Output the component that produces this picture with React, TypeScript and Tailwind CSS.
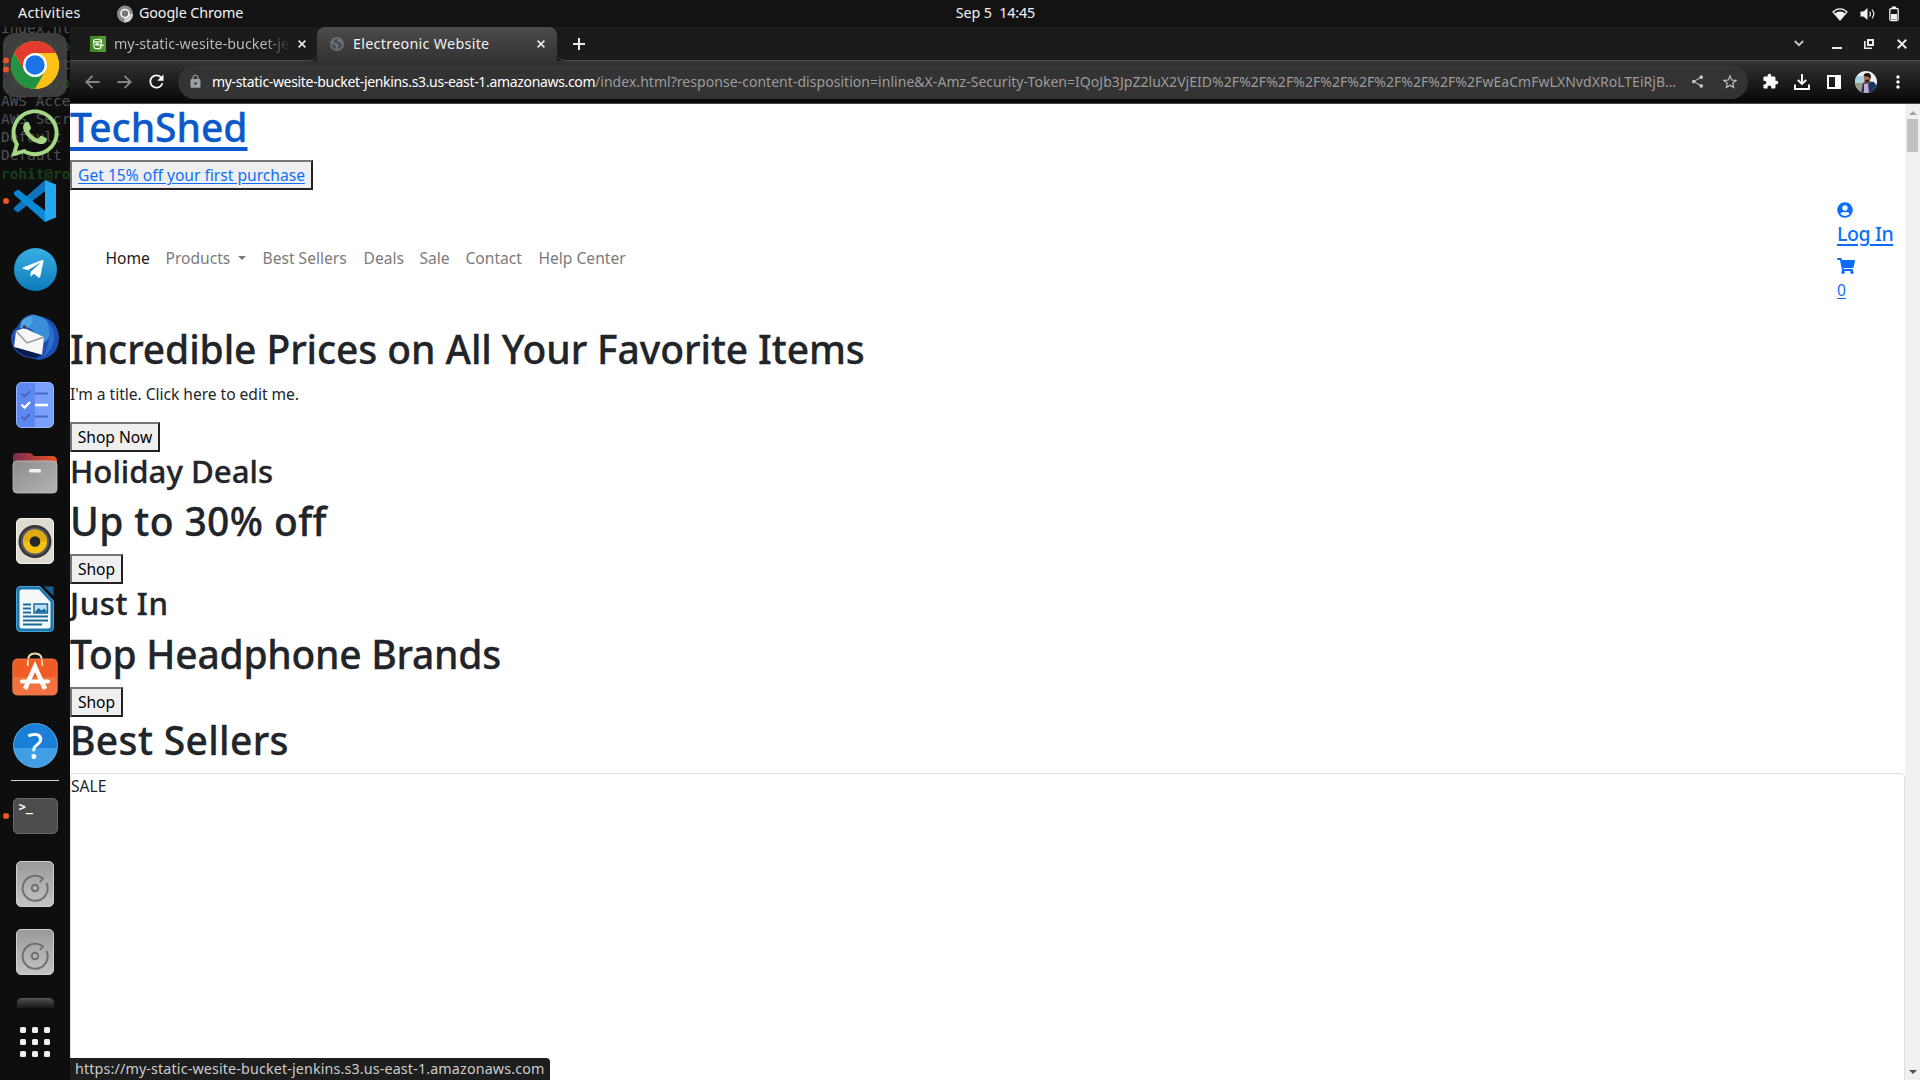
import React from "react";
import { FaWhatsapp, FaTelegramPlane, FaUserCircle, FaShoppingCart } from "react-icons/fa";
import { MdExtension, MdShare, MdStarBorder, MdLock, MdRefresh, MdMoreVert } from "react-icons/md";

const URL_REST =
  "/index.html?response-content-disposition=inline&X-Amz-Security-Token=IQoJb3JpZ2luX2VjEID%2F%2F%2F%2F%2F%2F%2F%2F%2F%2FwEaCmFwLXNvdXRoLTEiRjB…";

function TopBar() {
  return (
    <header className="grid h-[27px] shrink-0 grid-cols-3 items-center bg-[#131313] text-[14.3px] leading-none text-[#f2f2f2]">
      <div className="flex items-center pl-[18px]">
        <span className="w-[99px] tracking-[0.3px]">Activities</span>
        <svg width="16" height="18" viewBox="0 0 16 18" className="mr-1.5">
          <ellipse cx="8" cy="9" rx="8" ry="8.5" fill="#8b8b8b" />
          <path d="M8 9h8a8 8.500 0 0 1-9 8.500z" fill="#cfcfcf" />
          <circle cx="8" cy="8.500" r="4" fill="#777" stroke="#fff" strokeWidth="1.500" />
        </svg>
        <span className="tracking-[-0.1px]">Google Chrome</span>
      </div>
      <div className="whitespace-pre pl-[71px] text-center tracking-[-0.1px]">
        Sep 5  14:45
      </div>
      <div className="flex items-center justify-end gap-3 pr-5">
        <svg width="16" height="14" viewBox="0 0 16 14">
          <path d="M1 5C5 .8 11 .8 15 5L8 13z" fill="none" stroke="#f2f2f2" strokeWidth="1.200" />
          <path d="M3 6.300C6 4 10 4 13 6.300L8 13z" fill="#f2f2f2" />
        </svg>
        <svg width="16" height="14" viewBox="0 0 16 14" fill="none" stroke="#f2f2f2">
          <path d="M.5 4.500h3L7.500 1v12l-4-3.500h-3z" fill="#f2f2f2" stroke="none" />
          <path d="M9.500 4.500q1.800 2.500 0 5M12 2.500q3.600 4.500 0 9" strokeWidth="1.200" />
        </svg>
        <svg width="12" height="16" viewBox="0 0 12 16">
          <rect x="1.800" y="2.500" width="8.400" height="12" rx="1.500" fill="none" stroke="#f2f2f2" strokeWidth="1.300" />
          <path d="M4 0.500h4v2H4zM3 8h6v5.500H3z" fill="#f2f2f2" />
        </svg>
      </div>
    </header>
  );
}

function Cross({ size = 8 }: { size?: number }) {
  return (
    <svg width={size} height={size} viewBox="0 0 8 8" stroke="#e8e8e8" strokeWidth="1.600">
      <path d="M.6.6l6.800 6.800M7.400.6L.6 7.400" />
    </svg>
  );
}

function TabStrip() {
  return (
    <div className="flex h-[34px] shrink-0 bg-[#1b1b1b] text-[14.3px]">
      <div className="flex w-[247px] items-center rounded-br-[8px] border-b border-[#4d4d4d] pl-5 pr-[11px]">
        <svg width="16" height="16" viewBox="0 0 16 16">
          <rect width="16" height="16" fill="#3f8624" />
          <path d="M8 0h8v16H8z" fill="#52982f" />
          <g fill="none" stroke="#fff" strokeWidth="1.100">
            <ellipse cx="7.500" cy="4.500" rx="4" ry="1.300" />
            <path d="M3.500 4.500l.8 7.500q3.200 1.600 6.400 0l.8-7.500M7 8.200l5 1.500q1.600 0 .8-1.300M6 7h2v2H6z" />
          </g>
        </svg>
        <div className="ml-2 w-[177px] overflow-hidden whitespace-nowrap bg-gradient-to-r from-[#bdbdbd] from-85% to-[#1b1b1b] bg-clip-text text-transparent">
          my-static-wesite-bucket-je
        </div>
        <div className="ml-auto">
          <Cross />
        </div>
      </div>
      <div className="flex w-[240px] items-center rounded-t-[8px] bg-gradient-to-b from-[#4b4b4b] to-[#333333] pl-[13px] pr-3 text-[#f1f1f1]">
        <svg width="14" height="14" viewBox="0 0 14 14">
          <circle cx="7" cy="7" r="7" fill="#6a6d73" />
          <path d="M7.500 1.800Q4 2 3.800 5l3 1.200L9 8l-1.500 4q4-.5 4.500-5L9.500 5.500 6.800 4.600z" fill="#43464b" />
          <path d="M1.500 7l2.500.8L6 10l-.5 2Q2 11 1.500 7z" fill="#43464b" />
        </svg>
        <span className="ml-[9px] tracking-[0.3px]">Electreonic Website</span>
        <div className="ml-auto">
          <Cross />
        </div>
      </div>
      <div className="flex flex-1 items-center rounded-bl-[8px] border-b border-[#4d4d4d] pl-4 pr-[13px]">
        <svg width="12" height="12" viewBox="0 0 12 12" stroke="#e8e8e8" strokeWidth="2">
          <path d="M6 0v12M0 6h12" />
        </svg>
        <div className="ml-auto flex items-center">
          <svg width="10" height="7" viewBox="0 0 10 7" fill="none" stroke="#c8c8c8" strokeWidth="1.800" className="mr-7">
            <path d="M.8 1L5 5.200 9.200 1" />
          </svg>
          <div className="mr-[22px] mt-2 h-[2px] w-[10px] bg-[#ececec]" />
          <svg width="10" height="10" viewBox="0 0 10 10" fill="none" stroke="#ececec" className="mr-[23px]">
            <rect x="4" y="1" width="5" height="5" strokeWidth="2" />
            <path d="M.8 2v7.200H8" strokeWidth="1.600" />
          </svg>
          <Cross size={10} />
        </div>
      </div>
    </div>
  );
}

function Cell({ children }: { children: React.ReactNode }) {
  return <div className="flex w-8 shrink-0 items-center justify-center">{children}</div>;
}

function Toolbar() {
  return (
    <div className="flex h-[43px] shrink-0 items-center border-b border-[#4a4444] bg-gradient-to-b from-[#333333] to-[#080808] px-[6px] pb-px">
      <Cell>
        <svg width="15" height="14" viewBox="0 0 15 14" fill="none" stroke="#858585" strokeWidth="1.900">
          <path d="M14.500 7H1.500M7.500.8L1.300 7l6.200 6.200" />
        </svg>
      </Cell>
      <Cell>
        <svg width="15" height="14" viewBox="0 0 15 14" fill="none" stroke="#858585" strokeWidth="1.900">
          <path d="M.5 7h13M7.500.8L13.700 7l-6.200 6.200" />
        </svg>
      </Cell>
      <Cell>
        <MdRefresh className="size-[21px] text-white" />
      </Cell>
      <div className="ml-[6px] mr-[6px] flex h-[34px] flex-1 items-center rounded-full bg-[#333333] pl-[10px] text-[14px]">
        <MdLock className="size-[15px] text-[#9aa0a6]" />
        <span className="-mt-px ml-[9px] w-[383px] whitespace-nowrap tracking-[-0.33px] text-white">
          my-static-wesite-bucket-jenkins.s3.us-east-1.amazonaws.com
        </span>
        <span className="-mt-px whitespace-nowrap tracking-[0.04px] text-[#9c9c9c]">{URL_REST}</span>
        <MdShare className="ml-auto mr-4 size-[15px] text-[#c0c0c0]" />
        <MdStarBorder className="mr-[9px] size-[18px] text-[#c0c0c0]" />
      </div>
      <Cell>
        <MdExtension className="size-[17px] text-white" />
      </Cell>
      <Cell>
        <svg width="16" height="16" viewBox="0 0 16 16" fill="none" stroke="#fff" strokeWidth="1.900">
          <path d="M8 0v9.500M3.800 6L8 10l4.200-4M1 10.500V15h14v-4.500" />
        </svg>
      </Cell>
      <Cell>
        <div className="h-[14px] w-[14px] border-2 border-r-[6px] border-white" />
      </Cell>
      <Cell>
        <svg width="22" height="22" viewBox="0 0 22 22">
          <clipPath id="face">
            <circle cx="11" cy="11" r="11" />
          </clipPath>
          <g clipPath="url(#face)">
            <path d="M0 0h22v22H0z" fill="#e9f1f5" />
            <path d="M0 5h9v8H0z" fill="#a9cfe0" />
            <path d="M0 12h9v10H0z" fill="#9a9a86" />
            <path d="M8 12l4-2 7 1 3 4v7H6z" fill="#1d3563" />
            <path d="M9 13l4-1 1 10H9z" fill="#c9a9cf" />
            <path d="M9 4h6v7l-2 2-4-2z" fill="#b0704f" />
            <path d="M8.500 5Q9 1.500 13 2q3 .5 3 4l-1 3-1-3z" fill="#1c1715" />
            <path d="M10 9l4-.5V11l-3 1.500z" fill="#35221a" />
          </g>
        </svg>
      </Cell>
      <Cell>
        <MdMoreVert className="size-[20px] text-white" />
      </Cell>
    </div>
  );
}

function OutsetButton({ children, className = "text-black" }: { children: React.ReactNode; className?: string }) {
  return (
    <button
      className={`block h-[30px] border-2 border-t-[#767676] border-r-[#212121] border-b-[#212121] border-l-[#767676] bg-[#efefef] text-center text-[15.6px] leading-[24px] ${className}`}
    >
      {children}
    </button>
  );
}

function Title({ children, className }: { children: React.ReactNode; className: string }) {
  return (
    <h1 className={`mb-2 h-[48px] text-[39px] font-medium leading-[46px] [-webkit-text-stroke:0.3px_currentColor] ${className}`}>
      {children}
    </h1>
  );
}

function Subtitle({ children, className }: { children: React.ReactNode; className: string }) {
  return (
    <h2 className={`mb-2 text-[31.2px] font-medium leading-[38.400px] [-webkit-text-stroke:0.3px_currentColor] ${className}`}>
      {children}
    </h2>
  );
}

function Page() {
  return (
    <main className="flex-1 overflow-hidden bg-white text-[15.6px] leading-[24px] text-[#212529]">
      <Title className="tracking-[-0.02px] text-[#0a58ca] underline decoration-[3.500px] underline-offset-[5px]">TechShed</Title>
      <OutsetButton className="w-[243px] text-[#0d6efd] underline underline-offset-2">Get 15% off your first purchase</OutsetButton>
      <nav className="flex h-[136px] items-center pl-[35.500px] text-[#7b7b7b]">
        <a className="w-[60px] text-[#1a1a1a]">Home</a>
        <a className="flex w-[97px] items-center">
          Products
          <span className="ml-[8px] border-x-[4.500px] border-t-[4.500px] border-x-transparent border-t-[#7b7b7b]" />
        </a>
        <a className="w-[101px]">Best Sellers</a>
        <a className="w-[56px]">Deals</a>
        <a className="w-[46px]">Sale</a>
        <a className="w-[73px]">Contact</a>
        <a>Help Center</a>
        <div className="ml-auto w-[68px] self-start pt-2 text-[#0d6efd]">
          <div className="flex h-6 items-center">
            <FaUserCircle className="size-4" />
          </div>
          <div className="mb-2 h-6 whitespace-nowrap text-[19.500px] font-medium tracking-[-0.4px] underline decoration-2 underline-offset-[3px]">Log In</div>
          <div className="flex h-6 items-center">
            <FaShoppingCart className="h-4 w-[18px]" />
          </div>
          <div className="underline underline-offset-2">0</div>
        </div>
      </nav>
      <Title className="tracking-[-0.09px]">Incredible Prices on All Your Favorite Items</Title>
      <p className="mb-4 tracking-[-0.03px]">I'm a title. Click here to edit me.</p>
      <OutsetButton className="w-[90px] text-black">Shop Now</OutsetButton>
      <Subtitle className="tracking-[0px]">Holiday Deals</Subtitle>
      <Title className="tracking-[0.4px]">Up to 30% off</Title>
      <OutsetButton className="w-[53px] text-black">Shop</OutsetButton>
      <Subtitle className="tracking-[0.6px]">Just In</Subtitle>
      <Title className="tracking-[-0.25px]">Top Headphone Brands</Title>
      <OutsetButton className="w-[53px] text-black">Shop</OutsetButton>
      <Title className="tracking-[0.35px]">Best Sellers</Title>
      <div className="h-[400px] rounded border border-[#dfdfdf]">SALE</div>
    </main>
  );
}

function Scrollbar() {
  return (
    <div className="flex w-[15px] shrink-0 flex-col items-center bg-[#f0f0f0]">
      <div className="mt-[7px] border-x-4 border-b-4 border-x-transparent border-b-[#a3a3a3]" />
      <div className="mt-1 h-[33px] w-[11px] bg-[#c1c1c1]" />
      <div className="mb-[6px] mt-auto border-x-4 border-t-4 border-x-transparent border-t-[#505050]" />
    </div>
  );
}

function Chrome() {
  return (
    <svg width="48" height="48" viewBox="-24 -24 48 48">
      <circle r="24" fill="#fbbc05" />
      <path d="M-20.800-12A24 24 0 0 1 20.800-12L0-12-10.400 6z" fill="#e33b2e" />
      <path d="M-20.800-12A24 24 0 0 0 0 24L10.400 6-10.400 6z" fill="#229342" />
      <path d="M0 24L10.400 6 0-12H20.800A24 24 0 0 1 0 24z" fill="#fbc116" />
      <circle r="12" fill="#fff" />
      <circle r="9.700" fill="#1a73e8" />
    </svg>
  );
}

function VsCode() {
  return (
    <svg width="42" height="42" viewBox="0 0 42 42">
      <path d="M31 0L0 27.500v2.500l4 2.500L31 11.500z" fill="#0f74bd" />
      <path d="M31 42L0 14.500V12l4-2.500L31 30.500z" fill="#0a8ad6" />
      <path d="M31 0l11 4.500v33L31 42V0z" fill="#25a7f2" />
      <path d="M31 11.500v19L18.500 21z" fill="#0e0e0e" />
    </svg>
  );
}

function Telegram() {
  return (
    <div className="flex size-[43px] items-center justify-center rounded-full bg-gradient-to-b from-[#37aee2] to-[#0b7cba]">
      <FaTelegramPlane className="mr-1 size-[24px] text-white" />
    </div>
  );
}

function Thunderbird() {
  return (
    <svg width="48" height="48" viewBox="0 0 48 48">
      <path d="M6 14Q12 2 22 1l3 2Q46 4 48 24 48 44 28 47L14 44Q0 38 0 25q0-6 6-11z" fill="#1f4fb0" />
      <path d="M10 14Q16 1 24 2q16 3 16 18-6 14-12 8Q22 12 10 14z" fill="#3a8fd8" />
      <path d="M36 8q12 12 4 28l-8 9q10-20 4-37z" fill="#2b6fce" />
      <path d="M5 18l8-3 20 9-2 18L3 34z" fill="#f6f6f6" />
      <path d="M5 18l11 12 17-6" fill="none" stroke="#999" strokeWidth="1.500" />
      <path d="M3 34l28 8-6 3q-14 0-22-11z" fill="#0c1c4c" />
      <path d="M9 15Q10 4 20 3q4 6-2 11z" fill="#4fa5e0" />
      <circle cx="13.500" cy="14" r="1.800" fill="#5b3020" />
    </svg>
  );
}

function Todo() {
  return (
    <svg width="38" height="46" viewBox="0 0 38 46" fill="none" strokeWidth="2">
      <rect x=".5" y=".5" width="37" height="45" rx="5" fill="#7ba0fb" stroke="#9ab6fc" strokeWidth="1" />
      <path d="M1 5q0-4 4-4h14v44H5q-4 0-4-4z" fill="#5f87f2" />
      <g stroke="#4a68c0">
        <path d="M5.500 11.500l3 3 5.500-5.500M19 11.500h13M5.500 34.500l3 3 5.500-5.500M19 34.500h13" />
      </g>
      <path d="M5.500 22.500l3 3 5.500-5.500M19 23h13" stroke="#fff" strokeWidth="2.300" />
    </svg>
  );
}

function Files() {
  return (
    <svg width="46" height="42" viewBox="0 0 46 42">
      <defs>
        <linearGradient id="folder">
          <stop offset="0" stopColor="#7b2b50" />
          <stop offset="1" stopColor="#e95420" />
        </linearGradient>
        <linearGradient id="front" x2="1" y2="1">
          <stop offset="0" stopColor="#8c8c8c" />
          <stop offset="1" stopColor="#b4b4b4" />
        </linearGradient>
      </defs>
      <path d="M1 5q0-4 4-4h12q3 0 5 3h18q5 0 5 5v14H1z" fill="url(#folder)" />
      <rect x="1" y="9" width="44" height="32" rx="4" fill="url(#front)" stroke="#c4c4c4" strokeWidth=".8" />
      <rect x="17" y="17" width="12" height="3.500" rx="1.500" fill="#f2f2f2" />
    </svg>
  );
}

function Speaker() {
  return (
    <svg width="38" height="46" viewBox="0 0 38 46">
      <rect x=".5" y=".5" width="37" height="45" rx="4.500" fill="#dedad0" stroke="#f3f0e8" />
      <circle cx="19" cy="23.500" r="16.500" fill="#33343c" />
      <circle cx="19" cy="23.500" r="14" fill="#5b5b62" />
      <circle cx="19" cy="23.500" r="12" fill="#f5c211" />
      <path d="M7 23.500a12 12 0 0 1 24 0z" fill="#e0ab10" />
      <circle cx="19" cy="23.500" r="5.300" fill="#26262b" />
    </svg>
  );
}

function Writer() {
  return (
    <svg width="38" height="46" viewBox="0 0 38 46">
      <path d="M4 .5h20L37.500 15v26.500q0 4-4 4H4q-3.500 0-3.500-4V4.500Q.5.5 4 .5z" fill="#1a7ab0" stroke="#4aa3d4" />
      <path d="M5.500 3.500H23L34.500 16v24q0 2.500-2.500 2.500H6Q3.500 42.500 3.500 40V6q0-2.500 2-2.500z" fill="#f7f8fa" />
      <path d="M28 .5h9.500v9.500z" fill="#14608f" />
      <path d="M7 18.500h8M7 22.500h8M7 26.500h8M7 30.500h25M7 34.500h25M7 38.500h19" stroke="#1a6a9e" strokeWidth="2" />
      <rect x="18" y="18" width="13.500" height="9" fill="#bfe0f2" stroke="#1a6a9e" strokeWidth="1.500" />
      <path d="M18.500 26.500l4-4.500 3 2.500 3-2 3 4z" fill="#1a6a9e" />
    </svg>
  );
}

function Software() {
  return (
    <svg width="46" height="44" viewBox="0 0 46 44">
      <path d="M16 9q0-7.500 7-7.500T30 9" fill="none" stroke="#f0d9a4" strokeWidth="2.200" />
      <rect x=".8" y="7" width="44.400" height="36" rx="4.500" fill="#ef5b25" stroke="#f58a5e" strokeWidth=".8" />
      <path d="M1 25h44v14q0 4-4 4H5q-4 0-4-4z" fill="#f27340" />
      <path d="M13 37L23 14.500 33 37" fill="none" stroke="#fff" strokeWidth="4.500" />
      <path d="M10 29.500h26" stroke="#fff" strokeWidth="4.200" strokeLinecap="round" />
      <path d="M16 8q0 4-.3 6M30 8q0 4 .3 6" stroke="#f0d9a4" strokeWidth="2" fill="none" />
    </svg>
  );
}

function Help() {
  return (
    <div className="flex size-[45px] items-center justify-center rounded-full border border-[#58b0ee] bg-gradient-to-b from-[#1a7fd6] from-55% to-[#3f9ee6] to-55% text-[36px] leading-none text-white">
      <span className="mt-px">?</span>
    </div>
  );
}

function Terminal() {
  return (
    <div className="h-9 w-[45px] rounded-[5px] border border-[#6b6b6b] bg-[#4c4c4c] pl-[5px] pt-px font-['DejaVu_Sans_Mono'] text-[12px] font-bold leading-[14px] text-white">
      &gt;_
    </div>
  );
}

function Disk() {
  return (
    <svg width="38" height="46" viewBox="0 0 38 46" fill="none" stroke="#6e6e6e" strokeWidth="1.900">
      <defs>
        <linearGradient id="disk" x2="0" y2="1">
          <stop offset="0" stopColor="#9a9a9a" />
          <stop offset="1" stopColor="#c4c4c4" />
        </linearGradient>
      </defs>
      <rect x=".5" y=".5" width="37" height="45" rx="4.500" fill="url(#disk)" stroke="#cfcfcf" strokeWidth="1" />
      <path d="M30.500 22A12.500 12.500 0 1 1 27 17.500l-3 3.500" />
      <circle cx="19" cy="27" r="3.300" />
    </svg>
  );
}

function Slot({ children, dots = 0 }: { children: React.ReactNode; dots?: number }) {
  return (
    <div className="relative flex h-[68px] shrink-0 items-center justify-center">
      {children}
      <div className="absolute left-[3px] top-1/2 flex -translate-y-1/2 flex-col gap-[3px]">
        {Array.from({ length: dots }, (_, i) => (
          <i key={i} className="block size-[6px] rounded-full bg-[#e95420]" />
        ))}
      </div>
    </div>
  );
}

const SHELL: [string, boolean][] = [
  ["index.ht", false],
  ["rohit@ro", true],
  ["t     nt", false],
  ["rohit@ro", true],
  ["AWS Acce", false],
  ["AWS Secr", false],
  ["Default ", false],
  ["Default ", false],
  ["rohit@ro", true],
];

function Dock() {
  return (
    <aside className="relative h-full w-[70px] shrink-0 overflow-hidden bg-[#0e0e0e]">
      <div className="absolute left-[1px] top-[-8px] font-['DejaVu_Sans_Mono'] text-[14.400px] leading-[18.200px] text-[#525252]">
        {SHELL.map(([text, prompt], i) => (
          <div key={i} className={prompt ? "whitespace-pre font-bold text-[#174017]" : "whitespace-pre"}>
            {text}
          </div>
        ))}
      </div>
      <div className="relative flex h-full flex-col pt-1">
        <Slot dots={2}>
          <div className="flex size-16 items-center justify-center rounded-xl bg-[#4a4a4a]/80">
            <Chrome />
          </div>
        </Slot>
        <Slot>
          <FaWhatsapp className="size-[54px] text-[#a5d785]" />
        </Slot>
        <Slot dots={1}>
          <VsCode />
        </Slot>
        <Slot>
          <Telegram />
        </Slot>
        <Slot>
          <Thunderbird />
        </Slot>
        <Slot>
          <Todo />
        </Slot>
        <Slot>
          <Files />
        </Slot>
        <Slot>
          <Speaker />
        </Slot>
        <Slot>
          <Writer />
        </Slot>
        <Slot>
          <div className="-mt-1.5">
            <Software />
          </div>
        </Slot>
        <Slot>
          <Help />
        </Slot>
        <div className="mx-auto mb-px mt-px h-px w-12 shrink-0 bg-[#d0d0d0]" />
        <Slot dots={1}>
          <Terminal />
        </Slot>
        <Slot>
          <Disk />
        </Slot>
        <Slot>
          <Disk />
        </Slot>
        <div className="mx-auto mt-3 h-[10px] w-[37px] shrink-0 rounded-t-[5px] border-t border-[#5a5a5a] bg-gradient-to-b from-[#4a4a4a] to-[#191919]" />
        <div className="mx-auto mt-[19px] grid grid-cols-3 gap-[6px]">
          {Array.from({ length: 9 }, (_, i) => (
            <i key={i} className="block size-[6px] rounded-[1.500px] bg-[#f0f0f0]" />
          ))}
        </div>
      </div>
    </aside>
  );
}

export default function App() {
  return (
    <div className="flex h-[1080px] w-[1920px] flex-col overflow-hidden bg-black font-['Noto_Sans',sans-serif]">
      <TopBar />
      <div className="flex min-h-0 flex-1">
        <Dock />
        <div className="relative flex min-w-0 flex-1 flex-col">
          <TabStrip />
          <Toolbar />
          <div className="flex min-h-0 flex-1">
            <Page />
            <Scrollbar />
          </div>
          <div className="absolute bottom-0 left-0 h-[22px] w-[480px] whitespace-nowrap rounded-tr-[4px] bg-[#1e1e1e] pl-[5px] text-[14.3px] leading-[21px] tracking-[0.14px] text-[#cccccc]">
            https://my-static-wesite-bucket-jenkins.s3.us-east-1.amazonaws.com
          </div>
        </div>
      </div>
    </div>
  );
}
